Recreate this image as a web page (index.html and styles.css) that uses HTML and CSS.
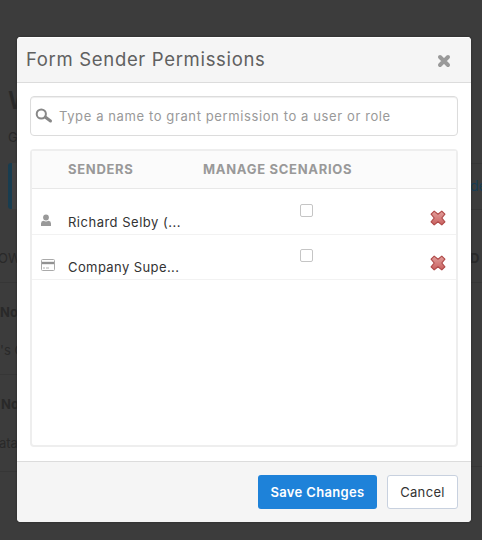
FILE: index.html
```html
<!DOCTYPE html>
<html lang="en">
<head>
<meta charset="utf-8">
<title>Form Sender Permissions</title>
<link rel="stylesheet" href="styles.css">
</head>
<body>
<svg class="defs" width="0" height="0">
  <defs>
    <linearGradient id="red" x1="0" y1="0" x2="0" y2="1"><stop offset="0" stop-color="#e2a09d"/><stop offset="1" stop-color="#c9605e"/></linearGradient>
    <symbol id="cross" viewBox="0 0 16 16"><path d="M4.2 1.1 8 4.2l3.8-3.1 3.1 3L11.8 8l3.1 3.9-3.1 3L8 11.8l-3.8 3.1-3.1-3L4.2 8 1.1 4.1z" fill="url(#red)" stroke="#b04b4a" stroke-width="1.2" stroke-linejoin="round"/></symbol>
  </defs>
</svg>
<div class="page" aria-hidden="true">
  <div class="strip left">
    <div class="heading">W</div>
    <div class="sub">G</div>
    <div class="tab"></div>
    <div class="owner">OW</div>
    <div class="cell first"><b>No</b></div>
    <div class="cell second">'s C</div>
    <div class="cell third"><b>No</b></div>
    <div class="cell fourth">ata</div>
  </div>
  <div class="strip right">
    <div class="band"><span>de</span></div>
    <div class="col">D</div>
    <div class="rule"></div>
  </div>
</div>
<main class="modal">
  <header class="modal-head">
    <h1><span>Form Sender Permissions</span></h1>
    <svg class="close" viewBox="0 0 14 14"><path d="M3 3l8 8M11 3l-8 8" stroke="#999" stroke-width="4" stroke-linecap="round"/></svg>
  </header>
  <section class="modal-body">
    <div class="search">
      <svg class="glass" viewBox="0 0 18 16"><circle cx="6.3" cy="6" r="4.6" fill="none" stroke="#888" stroke-width="2"/><path d="M10.2 9l5.3 4" stroke="#888" stroke-width="3" stroke-linecap="round"/></svg>
      <span class="hint">Type a name to grant permission to a user or role</span>
    </div>
    <div class="grid">
      <div class="row grid-head"><span></span><span class="th">SENDERS</span><span class="th">MANAGE SCENARIOS</span></div>
      <div class="row">
        <svg class="user" viewBox="0 0 12 13"><circle cx="6" cy="3.5" r="2.9" fill="#999"/><path d="M1 12V9.4Q1 7 3.5 6.8 6 8.4 8.5 6.8 11 7 11 9.4V12z" fill="#999"/></svg>
        <span class="name rich">Richard Selby (...</span>
        <i class="check"></i>
        <svg class="del"><use href="#cross"/></svg>
      </div>
      <div class="row">
        <svg class="card" viewBox="0 0 14 12"><rect x=".5" y=".5" width="13" height="11" rx="1" fill="#fff" stroke="#aaa"/><path d="M1 4h12" stroke="#929292" stroke-width="2.4"/><path d="M2 9h2M5 9h3" stroke="#999" stroke-width=".8"/></svg>
        <span class="name comp">Company Supe...</span>
        <i class="check"></i>
        <svg class="del"><use href="#cross"/></svg>
      </div>
    </div>
  </section>
  <footer class="modal-foot">
    <button class="btn primary"><span>Save Changes</span></button>
    <button class="btn plain"><span>Cancel</span></button>
  </footer>
</main>
</body>
</html>
```
FILE: styles.css
```css
* { box-sizing: border-box; }
body { margin: 0; width: 482px; height: 540px; overflow: hidden; background: #3c3c3c; font-family: Inter, "Liberation Sans", sans-serif; font-size: 13px; position: relative; }
.defs { position: absolute; }
svg { display: block; }
.page { position: absolute; inset: 0; display: flex; justify-content: space-between; color: #292929; white-space: nowrap; }
.strip { overflow: hidden; }
.left { width: 17px; padding-top: 86px; }
.right { width: 12px; padding-top: 163px; }
.heading { height: 40px; padding-left: 8px; font-size: 24px; line-height: 30px; font-weight: 600; }
.sub { height: 37px; padding-left: 8px; line-height: 22px; }
.tab { width: 20px; height: 46px; margin-left: 8px; border-left: 4px solid #183d50; border-radius: 3px; background: #424242; }
.owner { height: 74px; padding-top: 40px; margin-left: -2px; line-height: 18px; border-bottom: 1px solid #363636; }
.cell { line-height: 18px; }
.first { height: 38px; padding-top: 20px; }
.second { height: 54px; padding-top: 20px; border-bottom: 1px solid #363636; }
.third { height: 40px; padding: 20px 0 0 1px; }
.fourth { height: 57px; padding-top: 19px; margin-left: -1px; border-bottom: 1px solid #363636; }
.band { height: 47px; padding-top: 13px; border: solid #363636; border-width: 1px 0; color: #163d55; font-size: 14px; line-height: 18px; }
.col { height: 73px; padding-top: 39px; line-height: 18px; font-weight: 700; border-bottom: 1px solid #363636; }
.rule { height: 184px; border-bottom: 1px solid #363636; }

.modal { position: relative; width: 454px; height: 485px; margin: 37px 0 0 17px; background: #fff; border-radius: 4px; overflow: hidden; display: flex; flex-direction: column; box-shadow: 0 0 2px #222; }
.modal-head { height: 46px; flex: none; padding: 0 20px 0 9px; display: flex; justify-content: space-between; background: #f5f5f5; border-top: 1px solid #fff; border-bottom: 1px solid #dcdcdc; }
h1 { margin: 0; font-size: 18.5px; line-height: 42px; font-weight: 400; color: #606060; white-space: nowrap; letter-spacing: .67px; }
.close { width: 14px; height: 14px; margin-top: 16px; }
.modal-body { flex: 1; padding: 13px; }
.search { width: 428px; height: 40px; border: 1px solid #dcdcdc; border-radius: 4px; display: flex; align-items: center; padding-left: 4px; box-shadow: inset 0 1px 1px #eee; }
.glass { width: 18px; height: 16px; margin-right: 6px; flex: none; }
.hint { color: #999; white-space: nowrap; letter-spacing: .61px; }
.grid { width: 428px; height: 298px; margin-top: 13px; border: 2px solid #eee; border-radius: 4px; }
.row { height: 45px; display: grid; grid-template-columns: 36px 135px 1fr 26px; border-bottom: 1px solid #f2f2f2; white-space: nowrap; }
.grid-head { height: 38px; line-height: 37px; background: #fbfbfb; border-bottom-color: #e8e8e8; color: #999; font-weight: 700; }
.grid-head + .row { height: 46px; padding-top: 1px; }
.th { letter-spacing: .7px; }
.user { width: 12px; height: 13px; margin: 24px 0 0 8px; }
.card { width: 14px; height: 12px; margin: 24px 0 0 9px; }
.name { color: #333; line-height: 18px; margin-top: 23px; letter-spacing: .4px; }
.rich { letter-spacing: .5px; }
.check { width: 13px; height: 13px; margin: 14px 0 0 97px; border: 1px solid #c5c5c5; border-radius: 2px; background: #fff; }
.del { width: 16px; height: 16px; margin-top: 20px; }
.modal-foot { height: 61px; flex: none; display: flex; justify-content: flex-end; gap: 10px; padding: 13px 13px 0; background: #f5f5f5; border-top: 1px solid #dcdcdc; }
.btn { height: 34px; padding: 0; border-radius: 3px; font: 400 13px Inter, sans-serif; white-space: nowrap; letter-spacing: .35px; }
.primary { width: 119px; border: 0; background: #1e82d9; color: #fff; font-weight: 600; }
.plain { width: 71px; border: 1px solid #c8d1df; background: #fff; color: #333; }
```
